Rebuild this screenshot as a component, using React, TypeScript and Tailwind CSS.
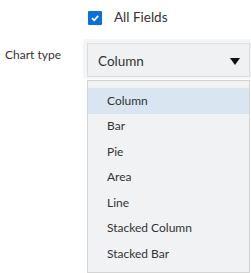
import React from "react";

const items = ["Column", "Bar", "Pie", "Area", "Line", "Stacked Column", "Stacked Bar"];

export default function App() {
  return (
    <div className="w-[251px] h-[273px] bg-white text-[#333333] overflow-hidden" style={{ fontFamily: 'Lato, sans-serif' }}>
      <div className="flex items-center h-[39px] pl-[88px] pb-[3px]">
        <div className="w-[14px] h-[14px] bg-[#0a72d6] rounded-[1px] flex items-center justify-center">
          <svg width="10" height="10" viewBox="0 0 10 10">
            <path d="M2 5.2 L4.2 7.3 L8.2 2.8" stroke="white" strokeWidth="1.8" fill="none" />
          </svg>
        </div>
        <span className="ml-[12px] text-[13.5px] leading-none">All Fields</span>
      </div>
      <div className="flex">
        <div className="w-[83px] pl-[5px] pt-[10px] text-[12px] leading-none">Chart type</div>
        <div className="flex-1 flex flex-col">
          <div className="pl-[4px] pt-[4px] pr-[1px] pb-[2px] bg-[#f4f5f6]">
            <div className="h-[34px] border border-[#dcdcdc] bg-[#f0f1f3] flex items-center pl-[10px] pr-[9px]">
              <span className="text-[13.5px] flex-1 pt-[2px]">Column</span>
              <svg width="10" height="7" viewBox="0 0 10 7" className="mt-[2px]">
                <path d="M0 0 H10 L5 7 Z" fill="#111" />
              </svg>
            </div>
          </div>
          <div className="mt-[1px] ml-[4px] mr-[1px] border border-[#d4d4d4] bg-[#f1f2f4] pt-[7px] pb-[5px]">
            {items.map((it, i) => (
              <div
                key={it}
                className={
                  "h-[25.5px] flex items-center pl-[19px] text-[12px] " +
                  (i === 0 ? "bg-[#d9e5f1]" : "")
                }
              >
                {it}
              </div>
            ))}
          </div>
        </div>
      </div>
    </div>
  );
}
